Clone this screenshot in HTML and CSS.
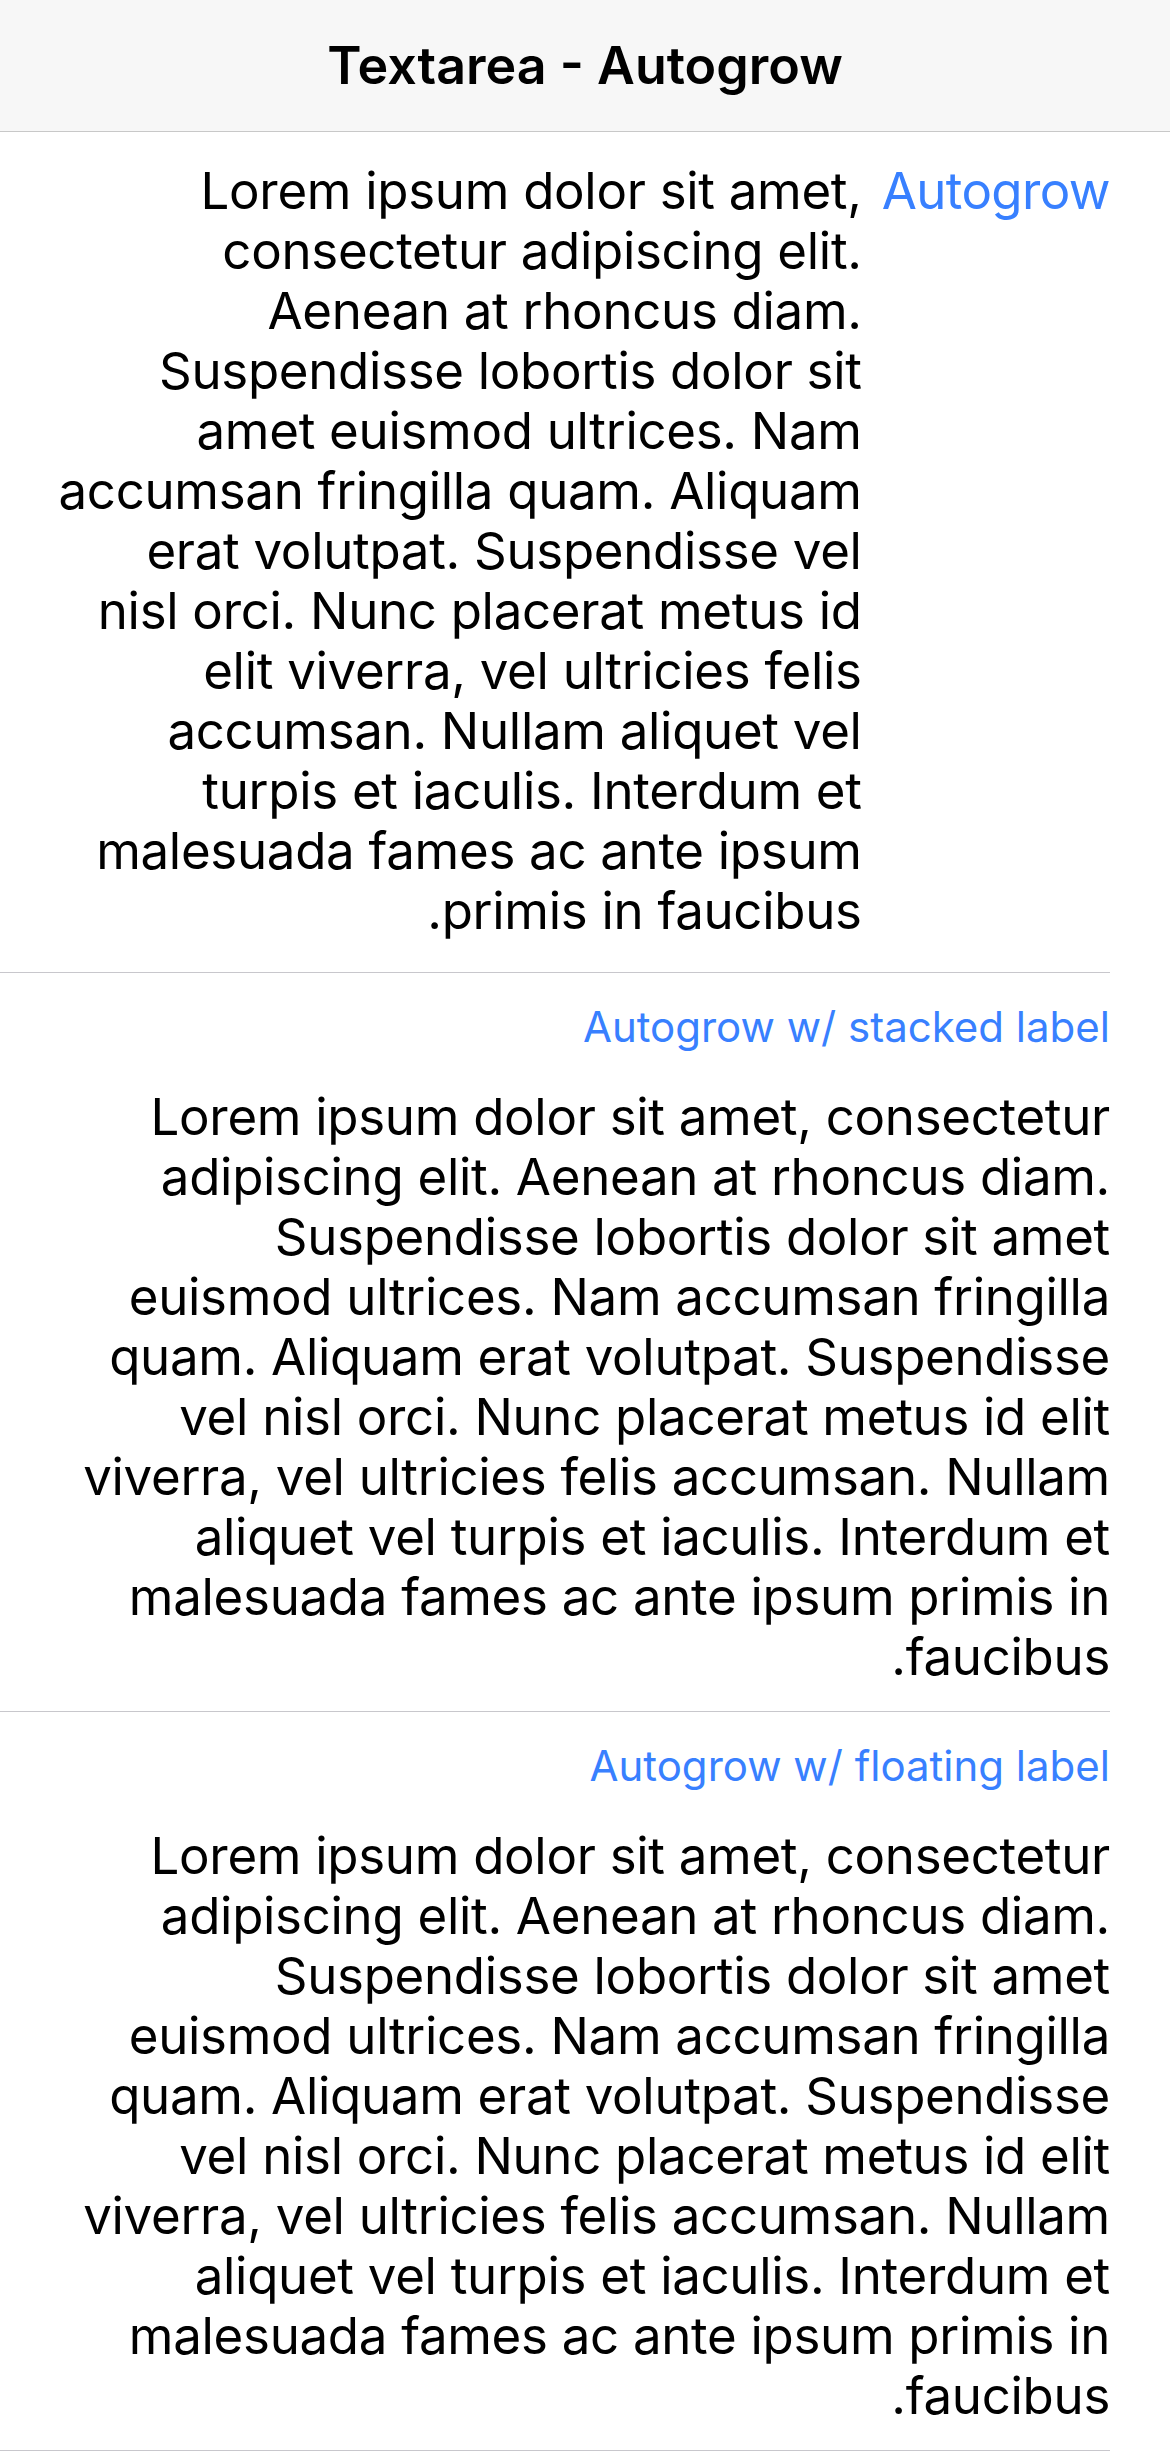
FILE: index.html
```html
<!DOCTYPE html>
<html lang="en" dir="rtl">
<head>
<meta charset="utf-8">
<title>Textarea - Autogrow</title>
<link rel="stylesheet" href="styles.css">
</head>
<body>
<header class="toolbar">
  <h1 class="title">Textarea - Autogrow</h1>
</header>
<main class="content">
  <div class="item">
    <div class="inner inline">
      <label class="label-inline">Autogrow</label>
      <div class="textarea"><span class="ln">Lorem ipsum dolor sit amet,</span> <span class="ln">consectetur adipiscing elit.</span> <span class="ln">Aenean at rhoncus diam.</span> <span class="ln">Suspendisse lobortis dolor sit</span> <span class="ln">amet euismod ultrices. Nam</span> <span class="ln">accumsan fringilla quam. Aliquam</span> <span class="ln">erat volutpat. Suspendisse vel</span> <span class="ln">nisl orci. Nunc placerat metus id</span> <span class="ln">elit viverra, vel ultricies felis</span> <span class="ln">accumsan. Nullam aliquet vel</span> <span class="ln">turpis et iaculis. Interdum et</span> <span class="ln">malesuada fames ac ante ipsum</span> <span class="ln">primis in faucibus.</span></div>
    </div>
  </div>
  <div class="item">
    <div class="inner stacked">
      <label class="label-small">Autogrow w/ stacked label</label>
      <div class="textarea"><span class="ln">Lorem ipsum dolor sit amet, consectetur</span> <span class="ln">adipiscing elit. Aenean at rhoncus diam.</span> <span class="ln">Suspendisse lobortis dolor sit amet</span> <span class="ln">euismod ultrices. Nam accumsan fringilla</span> <span class="ln">quam. Aliquam erat volutpat. Suspendisse</span> <span class="ln">vel nisl orci. Nunc placerat metus id elit</span> <span class="ln">viverra, vel ultricies felis accumsan. Nullam</span> <span class="ln">aliquet vel turpis et iaculis. Interdum et</span> <span class="ln">malesuada fames ac ante ipsum primis in</span> <span class="ln">faucibus.</span></div>
    </div>
  </div>
  <div class="item">
    <div class="inner stacked">
      <label class="label-small">Autogrow w/ floating label</label>
      <div class="textarea"><span class="ln">Lorem ipsum dolor sit amet, consectetur</span> <span class="ln">adipiscing elit. Aenean at rhoncus diam.</span> <span class="ln">Suspendisse lobortis dolor sit amet</span> <span class="ln">euismod ultrices. Nam accumsan fringilla</span> <span class="ln">quam. Aliquam erat volutpat. Suspendisse</span> <span class="ln">vel nisl orci. Nunc placerat metus id elit</span> <span class="ln">viverra, vel ultricies felis accumsan. Nullam</span> <span class="ln">aliquet vel turpis et iaculis. Interdum et</span> <span class="ln">malesuada fames ac ante ipsum primis in</span> <span class="ln">faucibus.</span></div>
    </div>
  </div>
</main>
</body>
</html>
```

FILE: styles.css
```css
* { box-sizing: border-box; }
html, body {
  margin: 0;
  padding: 0;
  background: #ffffff;
}
body {
  font-family: Inter, "Noto Sans", "Liberation Sans", sans-serif;
  color: #000000;
  direction: rtl;
  width: 1170px;
}
.toolbar {
  height: 132px;
  background: #f7f7f7;
  border-bottom: 1px solid #c8c8c8;
  display: flex;
  align-items: center;
  justify-content: center;
}
.title {
  margin: 0;
  font-size: 52px;
  font-weight: 600;
  line-height: 60px;
  color: #000;
}
.content {
  display: flex;
  flex-direction: column;
}
.item {
  padding-right: 60px;
}
.inner {
  border-bottom: 1px solid #c8c7cc;
}
.inner.inline {
  display: flex;
  align-items: flex-start;
  padding-top: 29px;
  padding-bottom: 31px;
  gap: 20px;
}
.label-inline {
  font-size: 51px;
  line-height: 60px;
  letter-spacing: -0.6px;
  color: #3880ff;
  white-space: nowrap;
  flex: none;
}
.inner.inline .textarea {
  flex: 1;
  padding-left: 48px;
}
.inner.stacked {
  display: flex;
  flex-direction: column;
  padding-top: 29px;
  padding-bottom: 24px;
}
.label-small {
  display: block;
  font-size: 42px;
  line-height: 50px;
  color: #3880ff;
  margin-bottom: 35px;
}
.inner.stacked .textarea {
  padding-left: 48px;
}
.textarea {
  font-size: 51px;
  line-height: 60px;
  letter-spacing: -0.3px;
  text-align: right;
}
.ln {
  white-space: nowrap;
}
```
